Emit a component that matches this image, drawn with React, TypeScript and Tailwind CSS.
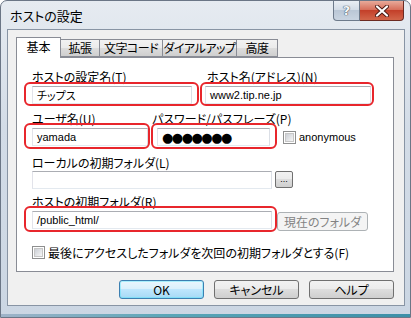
import React from "react";

const jp = "font-['Noto_Sans_CJK_JP',sans-serif] [font-feature-settings:'palt']";
const latin = "font-['Liberation_Sans','Noto_Sans_CJK_JP',sans-serif]";

function Ring({ className }: { className: string }) {
  return (
    <div
      className={`pointer-events-none absolute rounded-[6px] border-2 border-[#e8262c] ${className}`}
    />
  );
}

function Field({
  value,
  className = "",
  font = latin,
}: {
  value?: string;
  className?: string;
  font?: string;
}) {
  return (
    <div
      className={`flex h-[18px] items-center border border-[#abadb3] border-b-[#e3e9ef] border-l-[#e2e3ea] border-r-[#dbdfe6] bg-white pl-[4px] text-[11px] text-black ${font} ${className}`}
    >
      {value}
    </div>
  );
}

function Checkbox() {
  return (
    <div className="flex h-[13px] w-[13px] shrink-0 items-center justify-center border border-[#8e8f8f] bg-white">
      <div className="h-[9px] w-[9px] border border-[#c6c6c6] bg-gradient-to-br from-[#cbcfd5] to-[#f6f6f6]" />
    </div>
  );
}

function Btn({ label, primary = false }: { label: string; primary?: boolean }) {
  return (
    <button
      className={`relative flex h-[19px] w-[85px] items-center justify-center rounded-[3px] border text-[12px] text-black ${jp} ${
        primary
          ? "border-[#3c7fb1] bg-[linear-gradient(#eaf6fd_0%,#d9f0fc_50%,#bee6fd_50%,#a7d9f5_100%)] shadow-[inset_0_0_0_1px_#48e4fb66]"
          : "border-[#707070] bg-[linear-gradient(#f2f2f2_0%,#ebebeb_50%,#dddddd_50%,#cfcfcf_100%)]"
      }`}
    >
      {label}
    </button>
  );
}

const tabs = [
  { label: "基本", w: "w-[45px]" },
  { label: "拡張", w: "w-[39px]" },
  { label: "文字コード", w: "w-[63px]" },
  { label: "ダイアルアップ", w: "w-[74px]" },
  { label: "高度", w: "w-[41px]" },
];

export default function App() {
  return (
    <div className="flex h-[318px] w-[411px] flex-col overflow-hidden rounded-t-[7px] border border-[#6b7686] bg-[linear-gradient(#e6ebf1,#d3dce7_40%,#cbd6e3)]">
      {/* title bar */}
      <div className="flex h-[28px] items-start">
        <div className={`pl-[9px] pt-[5px] text-[13px] text-black ${jp}`}>ホストの設定</div>
        <div className="ml-auto mr-[6px] flex">
          <div className="flex h-[20px] w-[27px] items-center justify-center rounded-bl-[4px] border border-t-0 border-[#6d7a8b] bg-[linear-gradient(#e9eef4,#d1dae5_50%,#bac7d6_50%,#c9d4e1)] font-['DejaVu_Sans',sans-serif] text-[13px] font-bold text-[#f5f7fa] [text-shadow:0_0_1px_#2e3a48,0_0_1px_#2e3a48]">
            ?
          </div>
          <div className="flex h-[20px] w-[44px] items-center justify-center rounded-br-[4px] border border-l-0 border-t-0 border-[#6b2a22] bg-[linear-gradient(#e8aa9a,#d7705c_45%,#c3402a_50%,#d2664a)]">
            <svg width="14" height="12" viewBox="0 0 14 12">
              <path d="M2 1.5 L12 10.5 M12 1.5 L2 10.5" stroke="#4a1a14" strokeWidth="4" strokeLinecap="round" />
              <path d="M2 1.5 L12 10.5 M12 1.5 L2 10.5" stroke="#ffffff" strokeWidth="2.2" strokeLinecap="round" />
            </svg>
          </div>
        </div>
      </div>

      {/* client area */}
      <div className="ml-[6px] flex h-[277px] w-[398px] flex-col border border-[#8894a4] bg-[#f0f0f0]">
        {/* tabs */}
        <div className="relative z-10 ml-[8px] mt-[7px] flex h-[20px] items-end">
          {tabs.map((t, i) =>
            i === 0 ? (
              <div
                key={t.label}
                className={`flex h-[21px] shrink-0 ${t.w} -mb-px items-center justify-center whitespace-nowrap border border-b-0 border-[#898c95] bg-white pb-[2px] text-[12px] text-black ${jp}`}
              >
                {t.label}
              </div>
            ) : (
              <div
                key={t.label}
                className={`flex h-[18px] shrink-0 ${t.w} items-center justify-center whitespace-nowrap border border-l-0 border-[#898c95] bg-[linear-gradient(#f2f2f2,#ebebeb_50%,#dddddd_50%,#cfcfcf)] text-[12px] tracking-[-0.5px] text-black ${jp}`}
              >
                {t.label}
              </div>
            ),
          )}
        </div>

        {/* panel */}
        <div className={`ml-[8px] h-[215px] w-[378px] border border-[#898c95] bg-white pl-[15px] text-[12px] leading-[15px] text-black ${jp}`}>
          {/* row 1 */}
          <div className="mt-[11px] flex gap-[13px]">
            <div className="w-[160px]">
              <div className="h-[15px]">ホストの設定名(T)</div>
              <div className="relative mt-[2px]">
                <Field value="チップス" font={jp} />
                <Ring className="-bottom-[2px] -left-[8px] -right-[7px] -top-[4px]" />
              </div>
            </div>
            <div className="w-[166px]">
              <div className="h-[15px] pl-[2px]">ホスト名(アドレス)(N)</div>
              <div className="relative mt-[2px]">
                <Field value="www2.tip.ne.jp" />
                <Ring className="-bottom-[2px] -left-[5px] -right-[3px] -top-[4px]" />
              </div>
            </div>
          </div>

          {/* row 2 */}
          <div className="mt-[7px] flex">
            <div className="w-[116px]">
              <div className="h-[15px]">ユーザ名(U)</div>
              <div className="relative mt-[2px]">
                <Field value="yamada" />
                <Ring className="-bottom-[3px] -left-[8px] -right-[2px] -top-[5px]" />
              </div>
            </div>
            <div className="ml-[9px] w-[113px]">
              <div className="-ml-[5px] h-[15px] whitespace-nowrap">パスワード/パスフレーズ(P)</div>
              <div className="relative mt-[2px]">
                <Field
                  value="●●●●●●●"
                  font="font-['DejaVu_Sans',sans-serif] text-[13px] tracking-[-1.5px]"
                />
                <Ring className="-bottom-[3px] -left-[6px] -right-[7px] -top-[5px]" />
              </div>
            </div>
            <div className="ml-[13px] mt-[20px] flex items-center self-start">
              <Checkbox />
              <span className={`ml-[3px] text-[11px] leading-[13px] ${latin}`}>anonymous</span>
            </div>
          </div>

          {/* row 3 */}
          <div className="mt-[9px]">
            <div className="h-[15px]">ローカルの初期フォルダ(L)</div>
            <div className="mt-[1px] flex items-start">
              <Field className="w-[240px]" />
              <div className="ml-[3px] flex h-[17px] w-[18px] items-end justify-center rounded-[2px] border border-[#707070] bg-[linear-gradient(#f2f2f2,#ebebeb_50%,#dddddd_50%,#cfcfcf)] pb-[3px] font-['Liberation_Sans',sans-serif] text-[9px] leading-[9px]">
                ...
              </div>
            </div>
          </div>

          {/* row 4 */}
          <div className="mt-[5px]">
            <div className="h-[15px]">ホストの初期フォルダ(R)</div>
            <div className="mt-[2px] flex items-start">
              <div className="relative">
                <Field className="w-[240px]" value="/public_html/" />
                <Ring className="-bottom-[3px] -left-[8px] -right-[5px] -top-[5px]" />
              </div>
              <div className="ml-[5px] mt-px flex h-[19px] w-[91px] items-center justify-center rounded-[3px] border border-[#adb2b5] bg-[#f4f4f4] text-[12px] text-[#838383]">
                現在のフォルダ
              </div>
            </div>
          </div>

          {/* checkbox row */}
          <div className="mt-[14px] flex items-center">
            <Checkbox />
            <span className="ml-[3px]">最後にアクセスしたフォルダを次回の初期フォルダとする(F)</span>
          </div>
        </div>

        {/* buttons */}
        <div className="mt-[8px] flex justify-end gap-[10px] pr-[10px]">
          <Btn label="OK" primary />
          <Btn label="キャンセル" />
          <Btn label="ヘルプ" />
        </div>
      </div>
      <div className="mt-auto h-[3px] bg-[linear-gradient(90deg,#9fb3c8,#5aa6b8_40%,#3c8fa8)]" />
    </div>
  );
}
